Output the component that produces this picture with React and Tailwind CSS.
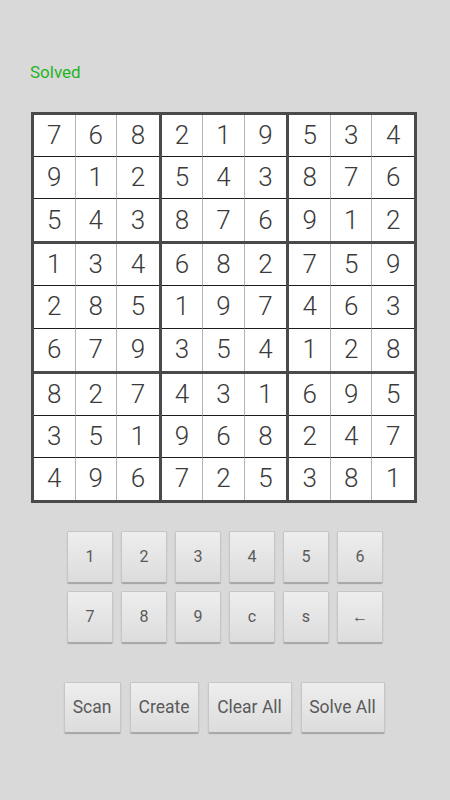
import React from "react";

const board = [
  [7, 6, 8, 2, 1, 9, 5, 3, 4],
  [9, 1, 2, 5, 4, 3, 8, 7, 6],
  [5, 4, 3, 8, 7, 6, 9, 1, 2],
  [1, 3, 4, 6, 8, 2, 7, 5, 9],
  [2, 8, 5, 1, 9, 7, 4, 6, 3],
  [6, 7, 9, 3, 5, 4, 1, 2, 8],
  [8, 2, 7, 4, 3, 1, 6, 9, 5],
  [3, 5, 1, 9, 6, 8, 2, 4, 7],
  [4, 9, 6, 7, 2, 5, 3, 8, 1],
];

const keyRows = [
  ["1", "2", "3", "4", "5", "6"],
  ["7", "8", "9", "c", "s", "←"],
];

const actions = [
  { label: "Scan", width: "w-[57px]" },
  { label: "Create", width: "w-[69px]" },
  { label: "Clear All", width: "w-[84px]" },
  { label: "Solve All", width: "w-[84px]" },
];

const btnBase =
  "flex items-center justify-center rounded-[2px] border border-[#c6c6c6] border-b-[#a9a9a9] bg-gradient-to-b from-[#eeeeee] to-[#dcdcdc] text-[#5a5a5a] shadow-[0_1px_1px_rgba(0,0,0,0.25)]";

const Block = ({ br, bc }) => {
  const cells = [];
  for (let r = 0; r < 3; r++) {
    for (let c = 0; c < 3; c++) {
      const value = board[br * 3 + r][bc * 3 + c];
      const borders = [
        c < 2 ? "border-r border-r-[#b4b4b4]" : "",
        r < 2 ? "border-b border-b-[#1c1c1c]" : "",
      ].join(" ");
      cells.push(
        <div
          key={`${r}-${c}`}
          className={`flex items-center justify-center bg-white text-[26px] font-light text-[#3a3a3a] ${borders}`}
        >
          {value}
        </div>
      );
    }
  }
  return <div className="grid grid-cols-3 grid-rows-3">{cells}</div>;
};

export default function App() {
  return (
    <div
      className="w-[450px] h-[800px] bg-[#d9d9d9] pt-[62px]"
      style={{ fontFamily: "Roboto, 'Liberation Sans', sans-serif" }}
    >
      <div className="pl-[30px] text-[17px] leading-[20px] text-[#1fb51f]">
        Solved
      </div>

      <div className="ml-[31px] mt-[30px] grid h-[391px] w-[386px] grid-cols-3 grid-rows-3 gap-[3px] bg-[#4a4a4a] p-[3px]">
        {[0, 1, 2].map((br) =>
          [0, 1, 2].map((bc) => <Block key={`${br}${bc}`} br={br} bc={bc} />)
        )}
      </div>

      <div className="mt-[28px] flex flex-col items-center gap-[8px]">
        {keyRows.map((row, i) => (
          <div key={i} className="flex gap-[8px]">
            {row.map((k) => (
              <div
                key={k}
                className={`${btnBase} h-[52px] w-[46px] text-[16px]`}
              >
                {k}
              </div>
            ))}
          </div>
        ))}
      </div>

      <div className="mt-[39px] flex justify-center gap-[9px] pr-[2px]">
        {actions.map(({ label, width }) => (
          <div
            key={label}
            className={`${btnBase} ${width} h-[51px] text-[17.5px]`}
          >
            {label}
          </div>
        ))}
      </div>
    </div>
  );
}
